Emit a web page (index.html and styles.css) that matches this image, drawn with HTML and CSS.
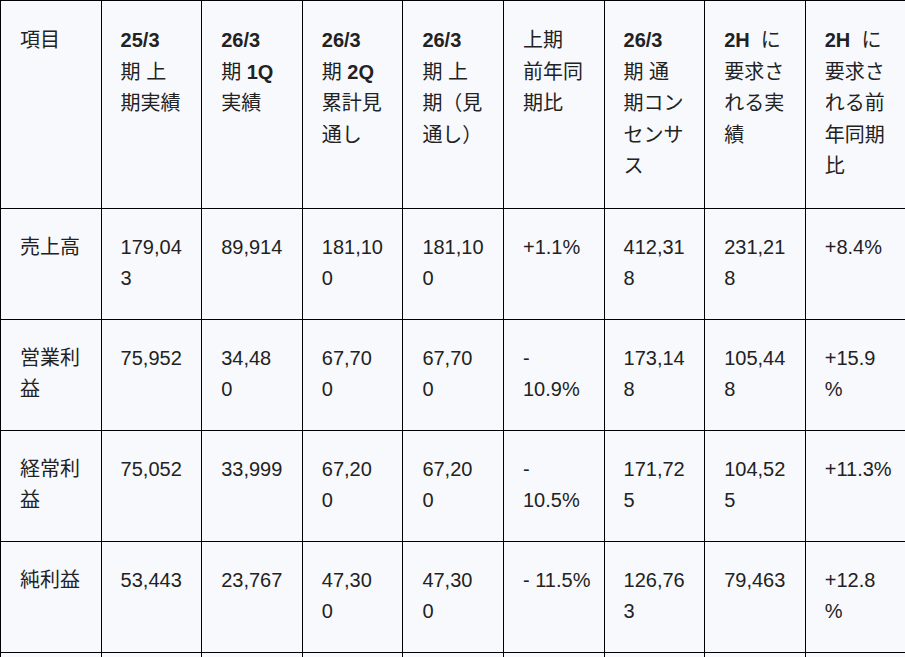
FILE: index.html
```html
<!DOCTYPE html>
<html lang="ja">
<head>
<meta charset="utf-8">
<link rel="stylesheet" href="styles.css">
</head>
<body>
<table class="fin">
<colgroup>
<col><col><col><col><col><col><col><col><col>
</colgroup>
<thead>
<tr>
<th>項目</th>
<th><b>25/3</b><br>期 上<br>期実績</th>
<th><b>26/3</b><br>期 <b>1Q</b><br>実績</th>
<th><b>26/3</b><br>期 <b>2Q</b><br>累計見<br>通し</th>
<th><b>26/3</b><br>期 上<br>期（見<br>通し）</th>
<th>上期<br>前年同<br>期比</th>
<th><b>26/3</b><br>期 通<br>期コン<br>センサ<br>ス</th>
<th><b>2H</b>&nbsp; に<br>要求さ<br>れる実<br>績</th>
<th><b>2H</b>&nbsp; に<br>要求さ<br>れる前<br>年同期<br>比</th>
</tr>
</thead>
<tbody>
<tr>
<td>売上高</td><td>179,04<br>3</td><td>89,914</td><td>181,10<br>0</td><td>181,10<br>0</td><td>+1.1%</td><td>412,31<br>8</td><td>231,21<br>8</td><td>+8.4%</td>
</tr>
<tr>
<td>営業利<br>益</td><td>75,952</td><td>34,48<br>0</td><td>67,70<br>0</td><td>67,70<br>0</td><td>-<br>10.9%</td><td>173,14<br>8</td><td>105,44<br>8</td><td>+15.9<br>%</td>
</tr>
<tr>
<td>経常利<br>益</td><td>75,052</td><td>33,999</td><td>67,20<br>0</td><td>67,20<br>0</td><td>-<br>10.5%</td><td>171,72<br>5</td><td>104,52<br>5</td><td>+11.3%</td>
</tr>
<tr>
<td>純利益</td><td>53,443</td><td>23,767</td><td>47,30<br>0</td><td>47,30<br>0</td><td class="nw">- 11.5%</td><td>126,76<br>3</td><td>79,463</td><td>+12.8<br>%</td>
</tr>
<tr>
<td>&nbsp;</td><td></td><td></td><td></td><td></td><td></td><td></td><td></td><td></td>
</tr>
</tbody>
</table>
</body>
</html>
```

FILE: styles.css
```css
html, body {
  margin: 0;
  padding: 0;
  background: #f8f9fd;
}
body {
  font-family: "Liberation Sans", Arial, "Noto Sans CJK JP", sans-serif;
  font-size: 20px;
  color: #222;
  overflow: hidden;
}
.fin {
  border-collapse: collapse;
  table-layout: fixed;
  width: 906px;
  background: #f8f9fd;
}
.fin col {
  width: 100.6px;
}
.fin th,
.fin td {
  border: 1px solid #000;
  padding: 23px 19px 24px;
  line-height: 31.5px;
  text-align: left;
  vertical-align: top;
  font-weight: normal;
}
.fin th {
  padding-top: 24px;
  padding-bottom: 25px;
}
.fin th b {
  font-weight: bold;
}
.fin .nw {
  white-space: nowrap;
}
```
